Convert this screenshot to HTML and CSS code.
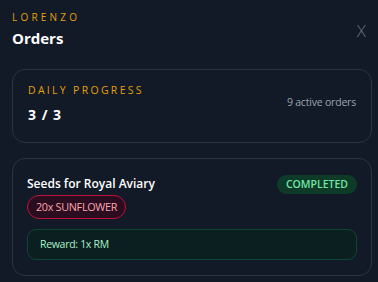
FILE: index.html
```html
<!doctype html>
<html lang="en">
<head>
    <meta charset="UTF-8">
    <title>Orders</title>
    <link rel="stylesheet" href="styles.css">
</head>
<body>
    <div class="panel">
        <header class="head">
            <div>
                <div class="npc">LORENZO</div>
                <h1 class="title">Orders</h1>
            </div>
            <button class="close">X</button>
        </header>

        <section class="card progress">
            <div>
                <div class="eyebrow">DAILY PROGRESS</div>
                <div class="count">3 / 3</div>
            </div>
            <span class="active">9 active orders</span>
        </section>

        <section class="card order">
            <div class="order-top">
                <div>
                    <div class="order-name">Seeds for Royal Aviary</div>
                    <span class="item">20x SUNFLOWER</span>
                </div>
                <span class="status">COMPLETED</span>
            </div>
            <div class="reward">Reward: 1x RM</div>
        </section>
    </div>
</body>
</html>
```

FILE: styles.css
```css
* {
    box-sizing: border-box;
}

body {
    margin: 0;
    background: #121927;
    font-family: "Open Sans", "Noto Sans", sans-serif;
    color: #fff;
}

.panel {
    padding: 10px 6px 0 12px;
}

.head {
    display: flex;
    justify-content: space-between;
    align-items: flex-start;
}

.npc {
    font-size: 10px;
    line-height: 14px;
    letter-spacing: 3.2px;
    color: #e3a008;
}

.title {
    margin: 4px 0 0;
    font-size: 15px;
    line-height: 20px;
    font-weight: 700;
}

.close {
    margin-top: 9px;
    padding: 0 6px;
    border: 0;
    background: none;
    font-family: "Open Sans", sans-serif;
    font-size: 17px;
    font-weight: 300;
    color: #6b7280;
}

.card {
    border: 1px solid #2b3444;
    border-radius: 13px;
}

.progress {
    margin-top: 21px;
    display: flex;
    justify-content: space-between;
    align-items: center;
    padding: 13px 15px 17px 15px;
}

.eyebrow {
    font-size: 10.5px;
    line-height: 14px;
    letter-spacing: 2.3px;
    color: #e3a008;
}

.count {
    margin-top: 8px;
    font-size: 14px;
    line-height: 20px;
    font-weight: 700;
    letter-spacing: 1px;
}

.active {
    margin-bottom: 4px;
    font-size: 10.5px;
    letter-spacing: -0.2px;
    color: #9ca3af;
}

.order {
    margin-top: 15px;
    padding: 16px 14px 15px 14px;
}

.order-top {
    display: flex;
    justify-content: space-between;
    align-items: flex-start;
}

.order-name {
    font-size: 12px;
    line-height: 18px;
    font-weight: 600;
}

.item {
    display: inline-block;
    margin-top: 2px;
    padding: 0 8px;
    border: 1px solid #be123c;
    border-radius: 12px;
    background: #2a0e1f;
    font-size: 10.8px;
    line-height: 22px;
    letter-spacing: -0.3px;
    color: #fda4af;
}

.status {
    padding: 0 9px;
    border-radius: 10px;
    background: #0e3a28;
    font-size: 10.5px;
    line-height: 19px;
    font-weight: 600;
    color: #6ee7a7;
}

.reward {
    margin-top: 10px;
    padding: 0 12px;
    border: 1px solid #0f4535;
    border-radius: 9px;
    background: #0b1e20;
    font-size: 10.5px;
    line-height: 29px;
    letter-spacing: -0.3px;
    color: #a7f3c8;
}
```
